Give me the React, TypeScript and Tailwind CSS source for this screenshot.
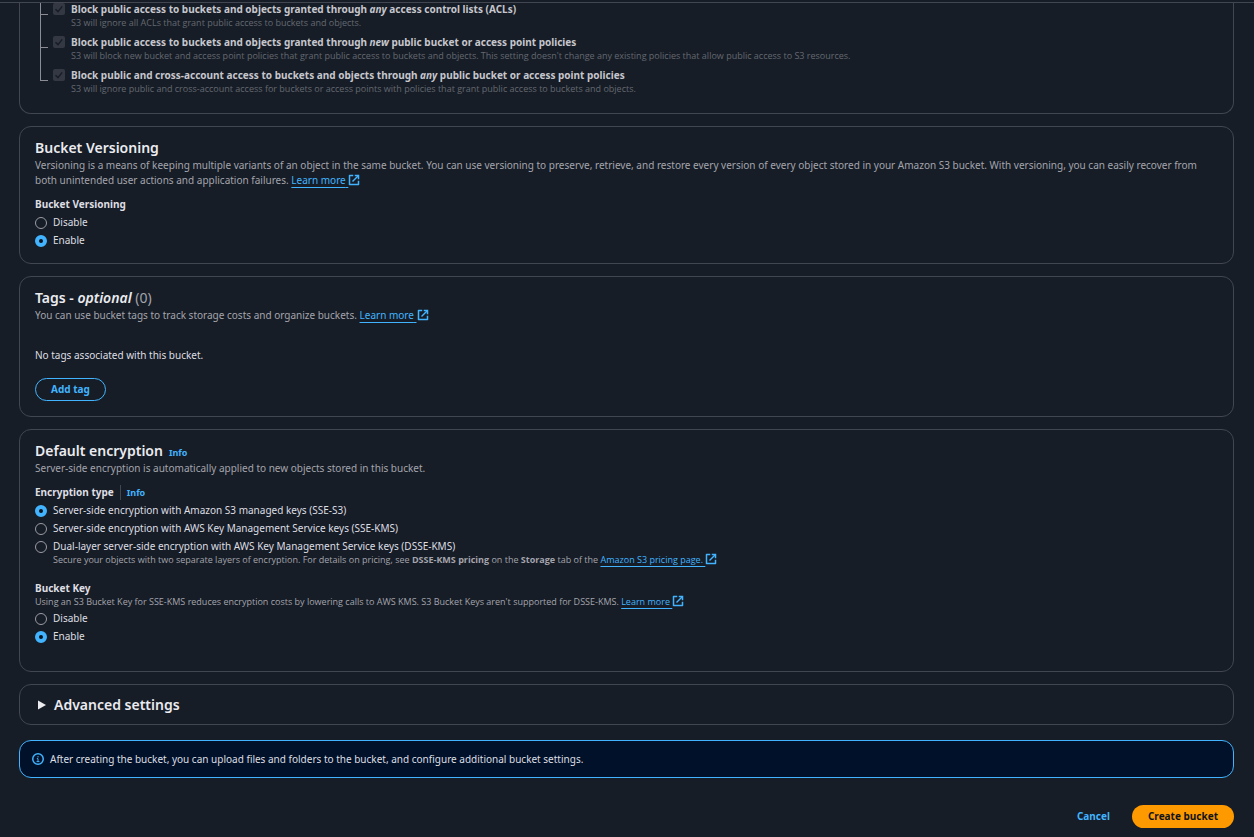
import type { ReactNode } from 'react';

function ExternalIcon() {
  return (
    <svg viewBox="0 0 16 16" className="-my-1 inline-block size-3 align-[2px]" fill="none" stroke="currentColor" strokeWidth="2" aria-hidden="true">
      <path strokeLinecap="square" d="M10 2h4v4" />
      <path d="m6 10 8-8" />
      <path strokeLinejoin="round" d="M14 9.048V14H2V2h5" />
    </svg>
  );
}

function ExternalLink({ children }: { children: ReactNode }) {
  return (
    <a href="#" className="whitespace-nowrap text-[#42b4ff]">
      <span className="underline decoration-1 underline-offset-3">{children}&nbsp;</span>
      <ExternalIcon />
    </a>
  );
}

function InfoLink() {
  return <a href="#" className="text-[9px] font-bold leading-3 text-[#42b4ff]">Info</a>;
}

function Card({ title, extra, description, children }: { title: ReactNode; extra?: ReactNode; description: ReactNode; children: ReactNode }) {
  return (
    <section className="rounded-xl border border-[#424650] px-[15px] pt-3 pb-[15px]">
      <div className="mb-0.5 flex items-baseline gap-1.5">
        <h2 className="text-[14px] font-semibold leading-[17px] text-[#ebebf0]">{title}</h2>
        {extra}
      </div>
      <p className="pr-5 text-[#a4a4ad]">{description}</p>
      {children}
    </section>
  );
}

function RadioOption({ name, label, checked, description }: { name: string; label: string; checked?: boolean; description?: ReactNode }) {
  const id = `${name}-${label.toLowerCase().replace(/[^a-z0-9]+/g, '-')}`;
  return (
    <div className="flex gap-1.5">
      <input
        type="radio"
        id={id}
        name={name}
        defaultChecked={checked}
        className="mt-0.5 size-3 shrink-0 appearance-none rounded-full border border-[#9c9ca4] bg-[#0f141a] not-checked:bg-[#161d26] checked:border-4 checked:border-[#42b4ff]"
      />
      <div>
        <label htmlFor={id} className="block text-[#dedee3]">{label}</label>
        {description && <p className="font-['Open_Sans',sans-serif] text-[9px] leading-3 text-[#a4a4ad]">{description}</p>}
      </div>
    </div>
  );
}

function BlockSetting({ id, label, description, last }: { id: string; label: ReactNode; description: string; last?: boolean }) {
  return (
    <li className="flex">
      <div className="mr-[5px] flex w-2 flex-col">
        <div className="h-3 border-b border-l border-[#8c8c94]" />
        {!last && <div className="grow border-l border-[#8c8c94]" />}
      </div>
      <div className="grid size-3 shrink-0">
        <input
          type="checkbox"
          id={id}
          defaultChecked
          disabled
          className="col-start-1 row-start-1 size-3 appearance-none rounded-xs bg-[#333843]"
        />
        <svg viewBox="0 0 12 12" className="pointer-events-none col-start-1 row-start-1 size-3" fill="none" stroke="#161d26" strokeWidth="1.5" aria-hidden="true">
          <path d="M2.5 6.2 5 8.6 9.2 3.4" />
        </svg>
      </div>
      <div className={last ? 'ml-1.5' : 'ml-1.5 pb-1.5'}>
        <label htmlFor={id} className="block font-bold leading-[13px] text-[#c6c6cd]">{label}</label>
        <p className="font-['Open_Sans',sans-serif] text-[9px] leading-[14px] text-[#656871]">{description}</p>
      </div>
    </li>
  );
}

export default function App() {
  return (
    <div className="min-h-screen bg-[#161d26] font-['Noto_Sans',sans-serif] text-[10px] leading-[15px] text-[#dedee3]">
      <header className="h-[3px] border-b border-[#424650]" />
      <main className="pr-5 pb-2 pl-[19px]">
        <form className="flex flex-col gap-3" onSubmit={(e) => e.preventDefault()}>
          <section className="rounded-b-xl border border-t-0 border-[#424650] pr-[15px] pb-[17px] pl-5">
            <ul>
              <BlockSetting
                id="block-acls"
                label={<>Block public access to buckets and objects granted through <em>any</em> access control lists (ACLs)</>}
                description="S3 will ignore all ACLs that grant public access to buckets and objects."
              />
              <BlockSetting
                id="block-new-policies"
                label={<>Block public access to buckets and objects granted through <em>new</em> public bucket or access point policies</>}
                description="S3 will block new bucket and access point policies that grant public access to buckets and objects. This setting doesn't change any existing policies that allow public access to S3 resources."
              />
              <BlockSetting
                id="block-cross-account"
                label={<>Block public and cross-account access to buckets and objects through <em>any</em> public bucket or access point policies</>}
                description="S3 will ignore public and cross-account access for buckets or access points with policies that grant public access to buckets and objects."
                last
              />
            </ul>
          </section>

          <Card
            title="Bucket Versioning"
            description={
              <>
                Versioning is a means of keeping multiple variants of an object in the same bucket. You can use versioning to preserve, retrieve, and restore every version of every object stored in your Amazon S3 bucket. With versioning, you can easily recover from both unintended user actions and application failures.{' '}
                <ExternalLink>Learn more</ExternalLink>
              </>
            }
          >
            <fieldset className="mt-[9px]">
              <legend className="font-bold">Bucket Versioning</legend>
              <div className="mt-[3px] flex flex-col gap-[3px]">
                <RadioOption name="versioning" label="Disable" />
                <RadioOption name="versioning" label="Enable" checked />
              </div>
            </fieldset>
          </Card>

          <Card
            title={<>Tags - <em>optional</em> <span className="font-normal text-[#a4a4ad]">(0)</span></>}
            description={<>You can use bucket tags to track storage costs and organize buckets. <ExternalLink>Learn more</ExternalLink></>}
          >
            <p className="mt-[25px]">No tags associated with this bucket.</p>
            <button type="button" className="mt-[15px] block rounded-full border border-[#42b4ff] px-[15px] py-[3px] font-bold text-[#42b4ff]">
              Add tag
            </button>
          </Card>

          <Card
            title="Default encryption"
            extra={<InfoLink />}
            description="Server-side encryption is automatically applied to new objects stored in this bucket."
          >
            <fieldset className="mt-[9px]">
              <legend className="flex items-center font-bold">
                Encryption type
                <span className="ml-1.5 border-l border-[#424650] pl-1.5"><InfoLink /></span>
              </legend>
              <div className="mt-[3px] flex flex-col gap-[3px]">
                <RadioOption name="encryption" label="Server-side encryption with Amazon S3 managed keys (SSE-S3)" checked />
                <RadioOption name="encryption" label="Server-side encryption with AWS Key Management Service keys (SSE-KMS)" />
                <RadioOption
                  name="encryption"
                  label="Dual-layer server-side encryption with AWS Key Management Service keys (DSSE-KMS)"
                  description={
                    <>
                      Secure your objects with two separate layers of encryption. For details on pricing, see <b>DSSE-KMS pricing</b> on the <b>Storage</b> tab of the{' '}
                      <ExternalLink>Amazon S3 pricing page.</ExternalLink>
                    </>
                  }
                />
              </div>
            </fieldset>
            <fieldset className="mt-[15px] mb-3">
              <legend className="font-bold">Bucket Key</legend>
              <p className="font-['Open_Sans',sans-serif] text-[9px] leading-3 text-[#a4a4ad]">
                Using an S3 Bucket Key for SSE-KMS reduces encryption costs by lowering calls to AWS KMS. S3 Bucket Keys aren't supported for DSSE-KMS.{' '}
                <ExternalLink>Learn more</ExternalLink>
              </p>
              <div className="mt-[3px] flex flex-col gap-[3px]">
                <RadioOption name="bucket-key" label="Disable" />
                <RadioOption name="bucket-key" label="Enable" checked />
              </div>
            </fieldset>
          </Card>

          <section className="rounded-xl border border-[#424650] px-[15px] py-2.5">
            <h2>
              <button type="button" aria-expanded="false" className="flex items-center gap-2 pl-[3px] text-[14px] font-semibold leading-[19px] text-[#ebebf0]">
                <svg viewBox="0 0 8 10" className="h-2.5 w-2" fill="currentColor" aria-hidden="true">
                  <path d="M0 0.5 8 5 0 9.5Z" />
                </svg>
                Advanced settings
              </button>
            </h2>
          </section>

          <div role="status" className="mt-[3px] flex items-center gap-1.5 rounded-xl border border-[#42b4ff] bg-[#001129] px-3 py-2.5">
            <svg viewBox="0 0 16 16" className="my-[2px] size-3 shrink-0 text-[#42b4ff]" fill="none" stroke="currentColor" aria-hidden="true">
              <circle cx="8" cy="8" r="7" strokeWidth="2" />
              <path d="M8 12V7.5H6.5M10 11.5H6M8 4v2" strokeWidth="1.3" />
            </svg>
            <p>After creating the bucket, you can upload files and folders to the bucket, and configure additional bucket settings.</p>
          </div>

          <div className="mt-[15px] flex items-center justify-end gap-1.5 font-bold">
            <button type="button" className="rounded-full px-4 py-1 text-[#42b4ff]">Cancel</button>
            <button type="submit" className="rounded-full bg-[#ff9900] px-4 py-1 text-[#0f141a]">Create bucket</button>
          </div>
        </form>
      </main>
    </div>
  );
}
